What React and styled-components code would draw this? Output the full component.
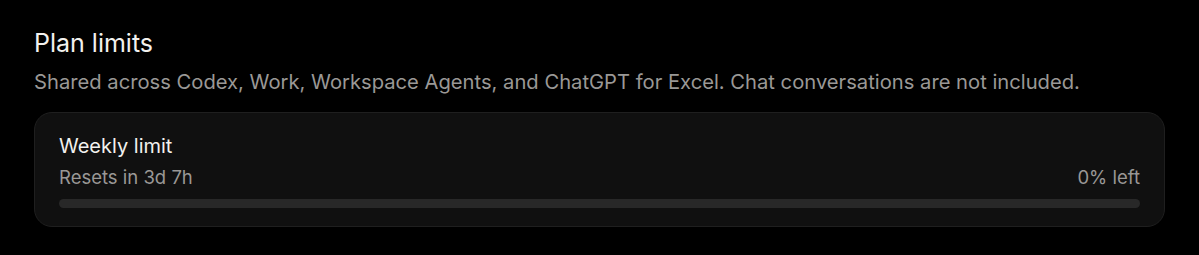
import React from "react";
import styled, { createGlobalStyle } from "styled-components";

const GlobalStyle = createGlobalStyle`
  html, body {
    margin: 0;
    padding: 0;
    background: #000;
  }
  body {
    font-family: Inter, "Noto Sans", sans-serif;
    -webkit-font-smoothing: antialiased;
  }
`;

const Page = styled.div`
  width: 1199px;
  height: 255px;
  box-sizing: border-box;
  padding: 27px 34px 0 34px;
  background: #000;
`;

const Title = styled.h2`
  margin: 0;
  font-size: 25px;
  font-weight: 400;
  line-height: 32px;
  color: #f2f1ee;
`;

const Subtitle = styled.p`
  margin: 9px 0 0;
  font-size: 20.2px;
  line-height: 28px;
  color: #9a9896;
`;

const Card = styled.div`
  margin-top: 16px;
  width: 1131px;
  box-sizing: border-box;
  padding: 20px 24px 18px;
  background: #101010;
  border: 1px solid #1f1f1f;
  border-radius: 18px;
`;

const CardTitle = styled.div`
  font-size: 20px;
  line-height: 26px;
  color: #f2f1ee;
`;

const Row = styled.div`
  display: flex;
  justify-content: space-between;
  align-items: center;
  margin-top: 5px;
  font-size: 18.5px;
  line-height: 26px;
  color: #9a9896;
`;

const Track = styled.div`
  margin-top: 9px;
  height: 9px;
  border-radius: 5px;
  background: #282828;
  overflow: hidden;
`;

const Fill = styled.div`
  height: 100%;
  background: #f2f1ee;
  border-radius: 5px;
`;

const limits = [{ name: "Weekly limit", resets: "Resets in 3d 7h", left: 0 }];

export default function App() {
  return (
    <Page>
      <GlobalStyle />
      <Title>Plan limits</Title>
      <Subtitle>
        Shared across Codex, Work, Workspace Agents, and ChatGPT for Excel. Chat
        conversations are not included.
      </Subtitle>
      {limits.map((l) => (
        <Card key={l.name}>
          <CardTitle>{l.name}</CardTitle>
          <Row>
            <span>{l.resets}</span>
            <span>{l.left}% left</span>
          </Row>
          <Track>
            <Fill style={{ width: `${l.left}%` }} />
          </Track>
        </Card>
      ))}
    </Page>
  );
}
